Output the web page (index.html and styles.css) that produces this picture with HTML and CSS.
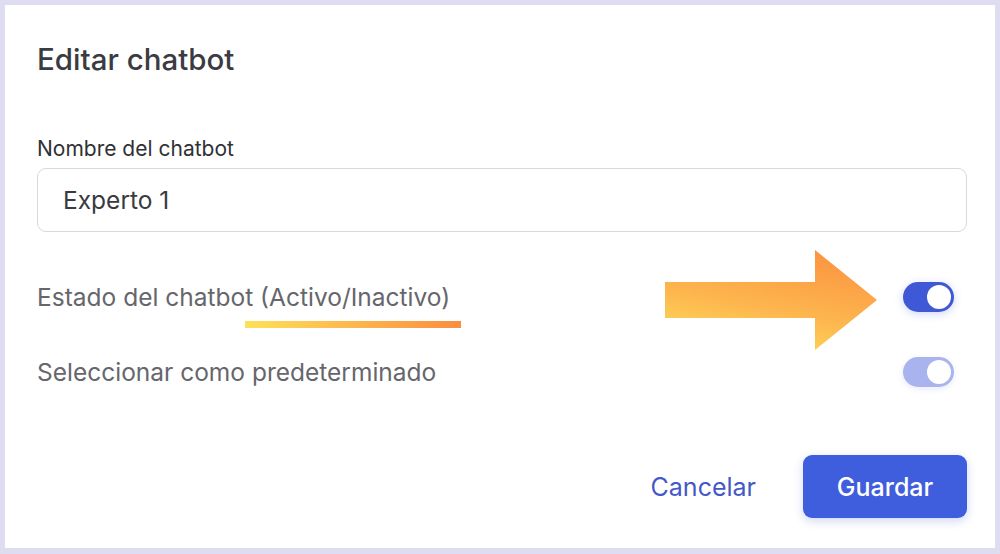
FILE: index.html
```html
<!DOCTYPE html>
<html lang="es">
<head>
<meta charset="utf-8">
<title>Editar chatbot</title>
<link rel="stylesheet" href="styles.css">
</head>
<body>
<div class="card">
  <h1 class="title">Editar chatbot</h1>
  <label class="field-label">Nombre del chatbot</label>
  <div class="input">Experto 1</div>
  <div class="row row-estado">
    <span class="row-text">Estado del chatbot <span class="mark">(Activo/Inactivo)</span></span>
    <span class="toggle on"><span class="knob"></span></span>
  </div>
  <div class="row row-pred">
    <span class="row-text">Seleccionar como predeterminado</span>
    <span class="toggle on light"><span class="knob"></span></span>
  </div>
  <div class="actions">
    <button class="btn-text">Cancelar</button>
    <button class="btn-primary">Guardar</button>
  </div>
  <svg class="arrow" width="214" height="102" viewBox="0 0 214 102">
    <defs>
      <linearGradient id="ag" x1="0.75" y1="0" x2="0.35" y2="1">
        <stop offset="0" stop-color="#fb9340"/>
        <stop offset="0.6" stop-color="#fdb64e"/>
        <stop offset="1" stop-color="#fdd85a"/>
      </linearGradient>
    </defs>
    <polygon points="0,32 150,32 150,0 212,50 150,100 150,68 0,68" fill="url(#ag)"/>
  </svg>
</div>
</body>
</html>
```
FILE: styles.css
```css
html, body {
  margin: 0;
  padding: 0;
}
body {
  background: #dddcf0;
  font-family: Inter, "Noto Sans", "Liberation Sans", sans-serif;
  width: 1000px;
  height: 554px;
  overflow: hidden;
}
.card {
  position: relative;
  box-sizing: border-box;
  margin: 5px 0 0 5px;
  width: 990px;
  height: 543px;
  background: #ffffff;
  padding: 38px 28px 0 32px;
}
.title {
  margin: 0;
  font-size: 29.5px;
  font-weight: 500;
  color: #3b3b42;
  line-height: 32px;
}
.field-label {
  display: block;
  margin-top: 62px;
  font-size: 21px;
  line-height: 24px;
  color: #303035;
}
.input {
  box-sizing: border-box;
  margin-top: 7px;
  height: 64px;
  border: 1.5px solid #d9d9dc;
  border-radius: 9px;
  padding: 0 0 0 25px;
  display: flex;
  align-items: center;
  font-size: 24.5px;
  color: #3a3a40;
}
.row {
  display: flex;
  align-items: center;
  justify-content: space-between;
  padding-right: 13px;
}
.row-estado {
  margin-top: 50px;
  height: 30px;
}
.row-pred {
  margin-top: 45px;
  height: 30px;
}
.row-text {
  font-size: 24.5px;
  color: #66666c;
}
.mark {
  position: relative;
}
.mark::after {
  content: "";
  position: absolute;
  left: -15px;
  right: -11px;
  bottom: -16px;
  height: 7px;
  background: linear-gradient(90deg, #fde159, #fdbb4e 45%, #fb8d40);
}
.toggle {
  position: relative;
  width: 51px;
  height: 30px;
  border-radius: 15px;
  background: #3f59d6;
  box-shadow: 0 2px 8px rgba(63, 89, 214, 0.25);
}
.toggle.light {
  background: #a9b4ee;
  box-shadow: 0 2px 6px rgba(63, 89, 214, 0.12);
}
.knob {
  position: absolute;
  top: 3px;
  right: 3px;
  width: 24px;
  height: 24px;
  border-radius: 50%;
  background: #ffffff;
}
.actions {
  display: flex;
  justify-content: flex-end;
  align-items: center;
  margin-top: 68px;
  gap: 47px;
}
.btn-text {
  border: 0;
  background: none;
  font-family: inherit;
  font-size: 25px;
  color: #4458c9;
  padding: 0;
  cursor: pointer;
}
.btn-primary {
  border: 0;
  width: 164px;
  height: 63px;
  border-radius: 9px;
  background: #3f5edd;
  color: #ffffff;
  font-family: inherit;
  font-size: 25px;
  font-weight: 500;
  box-shadow: 0 3px 10px rgba(63, 94, 221, 0.25);
  cursor: pointer;
}
.arrow {
  position: absolute;
  left: 660px;
  top: 245px;
}
```
